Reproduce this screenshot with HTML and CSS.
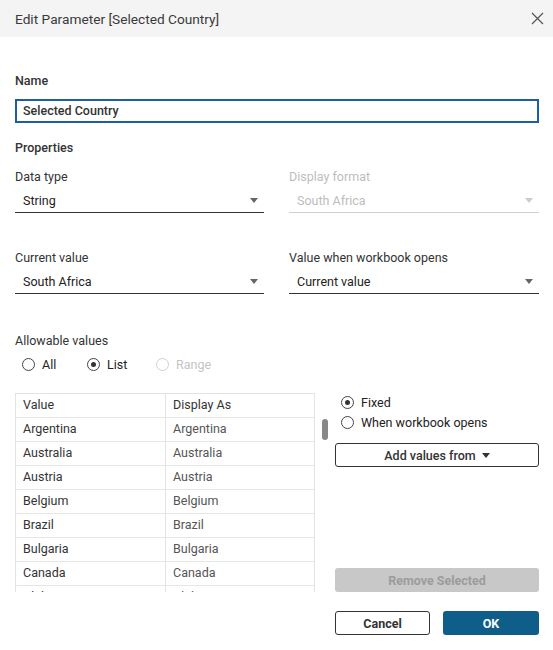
FILE: index.html
```html
<!DOCTYPE html>
<html>
<head>
<meta charset="utf-8">
<link rel="stylesheet" href="styles.css">
</head>
<body>
<div class="dialog">
  <div class="header">
    <span class="title">Edit Parameter [Selected Country]</span>
    <svg class="close" width="13" height="13" viewBox="0 0 13 13"><path d="M1 1L12 12M12 1L1 12" stroke="#555" stroke-width="1.2" fill="none"/></svg>
  </div>
  <div class="content">
    <div class="section-label name-label">Name</div>
    <div class="name-input">Selected Country</div>
    <div class="section-label props-label">Properties</div>
    <div class="grid">
      <div class="field">
        <div class="field-label">Data type</div>
        <div class="select"><span>String</span><span class="caret"></span></div>
      </div>
      <div class="field disabled">
        <div class="field-label">Display format</div>
        <div class="select"><span>South Africa</span><span class="caret"></span></div>
      </div>
      <div class="field second">
        <div class="field-label">Current value</div>
        <div class="select"><span>South Africa</span><span class="caret"></span></div>
      </div>
      <div class="field second">
        <div class="field-label">Value when workbook opens</div>
        <div class="select"><span>Current value</span><span class="caret"></span></div>
      </div>
    </div>
    <div class="field-label allow-label">Allowable values</div>
    <div class="radios">
      <span class="radio"><span class="dot"></span>All</span>
      <span class="radio checked"><span class="dot"></span>List</span>
      <span class="radio off"><span class="dot"></span>Range</span>
    </div>
    <div class="bottom">
      <div class="table">
        <div class="row head"><div class="c1">Value</div><div class="c2">Display As</div></div>
        <div class="row"><div class="c1">Argentina</div><div class="c2">Argentina</div></div>
        <div class="row"><div class="c1">Australia</div><div class="c2">Australia</div></div>
        <div class="row"><div class="c1">Austria</div><div class="c2">Austria</div></div>
        <div class="row"><div class="c1">Belgium</div><div class="c2">Belgium</div></div>
        <div class="row"><div class="c1">Brazil</div><div class="c2">Brazil</div></div>
        <div class="row"><div class="c1">Bulgaria</div><div class="c2">Bulgaria</div></div>
        <div class="row"><div class="c1">Canada</div><div class="c2">Canada</div></div>
        <div class="row"><div class="c1">Chile</div><div class="c2">Chile</div></div>
      </div>
      <div class="scroll"><div class="thumb"></div></div>
      <div class="side">
        <span class="radio checked"><span class="dot"></span>Fixed</span>
        <span class="radio"><span class="dot"></span>When workbook opens</span>
        <div class="btn add">Add values from <span class="small-caret"></span></div>
        <div class="btn remove">Remove Selected</div>
      </div>
    </div>
    <div class="footer">
      <div class="btn cancel">Cancel</div>
      <div class="btn ok">OK</div>
    </div>
  </div>
</div>
</body>
</html>
```
FILE: styles.css
```css
* { box-sizing: border-box; }
body {
  margin: 0;
  font-family: Roboto, "Liberation Sans", sans-serif;
  font-size: 12.5px;
  color: #333;
  background: #fff;
}
.dialog { width: 553px; height: 650px; }
.header {
  height: 37px;
  background: #f4f4f4;
  display: flex;
  align-items: center;
  justify-content: space-between;
  padding: 0 9px 0 15px;
}
.title { color: #3a3a3a; font-size: 13.7px; }
.close { display: block; }
.content { padding: 0 14px 0 15px; }
.section-label { font-weight: 500; height: 16px; line-height: 16px; }
.name-label { margin-top: 36px; }
.name-input {
  margin-top: 10px;
  height: 24px;
  border: 2px solid #1c5ea5;
  padding-left: 6px;
  line-height: 20px;
  font-weight: 500;
}
.props-label { margin-top: 17px; }
.grid {
  display: grid;
  grid-template-columns: 249px 250px;
  column-gap: 25px;
}
.field { margin-top: 13px; }
.field.second { margin-top: 37px; }
.field-label { height: 16px; line-height: 16px; }
.select {
  margin-top: 3px;
  height: 25px;
  border-bottom: 1px solid #333;
  display: flex;
  align-items: center;
  justify-content: space-between;
  padding: 0 6px 0 8px;
  font-weight: 400;
  color: #222;
}
.caret {
  width: 0; height: 0;
  border-left: 4px solid transparent;
  border-right: 4px solid transparent;
  border-top: 5px solid #666;
}
.disabled { color: #bdbdbd; }
.disabled .select { border-bottom-color: #d0d0d0; color: #bdbdbd; }
.disabled .caret { border-top-color: #ccc; }
.allow-label { margin-top: 39px; }
.radios {
  margin-top: 7px;
  display: flex;
  padding-left: 7px;
  height: 16px;
  align-items: center;
}
.radio {
  display: flex;
  align-items: center;
  gap: 7px;
  height: 16px;
  color: #222;
}
.radios .radio:nth-child(1) { width: 65px; }
.radios .radio:nth-child(2) { width: 69px; }
.dot {
  width: 13px; height: 13px;
  border: 1px solid #444;
  border-radius: 50%;
  display: inline-flex;
  align-items: center;
  justify-content: center;
}
.checked .dot::after {
  content: "";
  width: 5px; height: 5px;
  border-radius: 50%;
  background: #333;
}
.radio.off { color: #c4c4c4; }
.off .dot { border-color: #d0d0d0; }
.bottom {
  margin-top: 21px;
  display: flex;
  height: 199px;
}
.table {
  width: 300px;
  height: 199px;
  overflow: hidden;
  border: 1px solid #e3e3e3;
  border-bottom: none;
}
.row {
  display: flex;
  height: 24px;
  border-bottom: 1px solid #e6e6e6;
}
.row > div { line-height: 22px; padding-left: 7px; }
.c1 { width: 150px; border-right: 1px solid #e3e3e3; }
.c2 { flex: 1; color: #555; }
.head .c2 { color: #333; }
.scroll { width: 20px; padding: 26px 0 0 7px; }
.thumb { width: 6px; height: 21px; background: #888; border-radius: 3px; }
.side {
  width: 204px;
  display: flex;
  flex-direction: column;
  padding-top: 1px;
}
.side .radio { padding-left: 6px; margin-bottom: 4px; }
.btn {
  height: 24px;
  border-radius: 3px;
  display: flex;
  align-items: center;
  justify-content: center;
  font-weight: 500;
}
.add {
  margin-top: 9px;
  border: 1px solid #333;
  gap: 6px;
}
.small-caret {
  width: 0; height: 0;
  border-left: 4px solid transparent;
  border-right: 4px solid transparent;
  border-top: 5px solid #333;
}
.remove {
  margin-top: auto;
  margin-bottom: 0;
  background: #c8c8c8;
  color: #9c9c9c;
  font-weight: 700;
}
.footer {
  margin-top: 19px;
  display: flex;
  justify-content: flex-end;
  gap: 13px;
}
.cancel { width: 95px; border: 1px solid #333; font-weight: 700; color: #333; }
.ok { width: 96px; background: #0e5e89; color: #fff; font-weight: 700; }
```
